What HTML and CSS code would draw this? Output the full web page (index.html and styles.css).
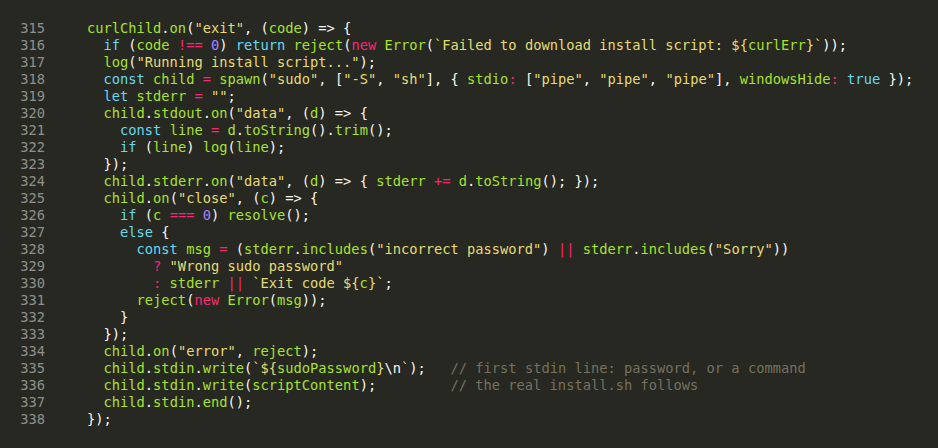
FILE: index.html
```html
<!DOCTYPE html>
<html>
<head>
<meta charset="utf-8">
<link rel="stylesheet" href="styles.css">
</head>
<body>
<div class="editor">
<pre class="gutter">315
316
317
318
319
320
321
322
323
324
325
326
327
328
329
330
331
332
333
334
335
336
337
338</pre>
<pre class="code"><span class="f">curlChild</span>.<span class="f">on</span>(<span class="s">"exit"</span>, (<span class="f">code</span>) =&gt; {
  <span class="k">if</span> (<span class="f">code</span> <span class="o">!==</span> <span class="n">0</span>) <span class="k">return</span> <span class="f">reject</span>(<span class="o">new</span> <span class="f">Error</span>(<span class="s">`Failed to download install script: ${</span><span class="f">curlErr</span><span class="s">}`</span>));
  <span class="f">log</span>(<span class="s">"Running install script..."</span>);
  <span class="k">const</span> <span class="f">child</span> <span class="o">=</span> <span class="f">spawn</span>(<span class="s">"sudo"</span>, [<span class="s">"-S"</span>, <span class="s">"sh"</span>], { <span class="f">stdio</span><span class="o">:</span> [<span class="s">"pipe"</span>, <span class="s">"pipe"</span>, <span class="s">"pipe"</span>], <span class="f">windowsHide</span><span class="o">:</span> <span class="k">true</span> });
  <span class="k">let</span> <span class="f">stderr</span> <span class="o">=</span> <span class="s">""</span>;
  <span class="f">child</span>.<span class="f">stdout</span>.<span class="f">on</span>(<span class="s">"data"</span>, (<span class="f">d</span>) =&gt; {
    <span class="k">const</span> <span class="f">line</span> <span class="o">=</span> <span class="f">d</span>.<span class="f">toString</span>().<span class="f">trim</span>();
    <span class="k">if</span> (<span class="f">line</span>) <span class="f">log</span>(<span class="f">line</span>);
  });
  <span class="f">child</span>.<span class="f">stderr</span>.<span class="f">on</span>(<span class="s">"data"</span>, (<span class="f">d</span>) =&gt; { <span class="f">stderr</span> <span class="o">+=</span> <span class="f">d</span>.<span class="f">toString</span>(); });
  <span class="f">child</span>.<span class="f">on</span>(<span class="s">"close"</span>, (<span class="f">c</span>) =&gt; {
    <span class="k">if</span> (<span class="f">c</span> <span class="o">===</span> <span class="n">0</span>) <span class="f">resolve</span>();
    <span class="k">else</span> {
      <span class="k">const</span> <span class="f">msg</span> <span class="o">=</span> (<span class="f">stderr</span>.<span class="f">includes</span>(<span class="s">"incorrect password"</span>) <span class="o">||</span> <span class="f">stderr</span>.<span class="f">includes</span>(<span class="s">"Sorry"</span>))
        <span class="o">?</span> <span class="s">"Wrong sudo password"</span>
        <span class="o">:</span> <span class="f">stderr</span> <span class="o">||</span> <span class="s">`Exit code ${</span><span class="f">c</span><span class="s">}`</span>;
      <span class="f">reject</span>(<span class="o">new</span> <span class="f">Error</span>(<span class="f">msg</span>));
    }
  });
  <span class="f">child</span>.<span class="f">on</span>(<span class="s">"error"</span>, <span class="f">reject</span>);
  <span class="f">child</span>.<span class="f">stdin</span>.<span class="f">write</span>(<span class="s">`${</span><span class="f">sudoPassword</span><span class="s">}</span><span class="e">\n</span><span class="s">`</span>);   <span class="c">// first stdin line: password, or a command</span>
  <span class="f">child</span>.<span class="f">stdin</span>.<span class="f">write</span>(<span class="f">scriptContent</span>);         <span class="c">// the real install.sh follows</span>
  <span class="f">child</span>.<span class="f">stdin</span>.<span class="f">end</span>();
});</pre>
</div>
</body>
</html>
```
FILE: styles.css
```css
html, body {
  margin: 0;
  padding: 0;
  background: #272822;
  height: 100%;
  overflow: hidden;
}
.editor {
  display: flex;
  padding-top: 20px;
  font-family: "DejaVu Sans Mono", monospace;
  font-size: 13.72px;
  line-height: 17px;
  color: #f8f8f2;
}
pre {
  margin: 0;
  font: inherit;
}
.gutter {
  width: 45px;
  text-align: right;
  color: #8f908a;
  flex: none;
}
.code {
  padding-left: 42px;
  white-space: pre;
}
.f { color: #a6e22e; }
.s { color: #e6db74; }
.k { color: #66d9ef; }
.o { color: #f92672; }
.n { color: #ae81ff; }
.c { color: #75715e; }
.e { color: #f8f8f2; }
```
